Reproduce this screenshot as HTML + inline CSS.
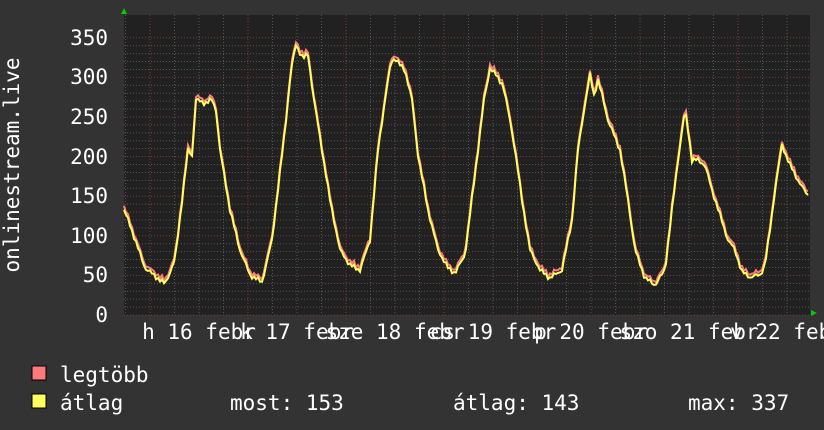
<!DOCTYPE html>
<html><head><meta charset="utf-8"><style>
html,body{margin:0;padding:0;background:#333333;}
svg{display:block}
text{font-family:"DejaVu Sans Mono","Liberation Mono",monospace;fill:#fff;font-size:21px}
</style></head><body>
<svg id="g" width="824" height="430" xmlns="http://www.w3.org/2000/svg">
<rect width="824" height="430" fill="#333333"/>
<rect x="124" y="15" width="686" height="300" fill="#212121"/>
<g id="grid"></g>
<polyline id="mx" fill="none" stroke="#ff7b7b" stroke-width="2"/>
<polyline id="av" fill="none" stroke="#ffff60" stroke-width="2"/>
<polygon points="121,14 127,14 124,8" fill="#00cc00"/>
<polygon points="811,310 811,316 817,313" fill="#00cc00"/>
<g text-anchor="end">
<text x="108" y="45">350</text><text x="108" y="84">300</text><text x="108" y="124">250</text>
<text x="108" y="164">200</text><text x="108" y="203">150</text><text x="108" y="243">100</text>
<text x="108" y="282">50</text><text x="108" y="322">0</text>
</g>
<text transform="translate(19,165) rotate(-90)" text-anchor="middle">onlinestream.live</text>
<g text-anchor="middle">
<text x="199" y="339">h 16 febr</text><text x="297" y="339">k 17 febr</text>
<text x="395" y="339">sze 18 febr</text><text x="493" y="339">cs 19 febr</text>
<text x="591" y="339">p 20 febr</text><text x="689" y="339">szo 21 febr</text>
<text x="787" y="339">v 22 febr</text>
</g>
<rect x="32" y="366" width="14" height="14" fill="#ff7b7b" stroke="#000" stroke-width="1"/>
<rect x="32" y="394" width="14" height="14" fill="#ffff60" stroke="#000" stroke-width="1"/>
<text x="60" y="382">legtöbb</text>
<text x="60" y="410">átlag</text>
<text x="230" y="410">most: 153</text>
<text x="453" y="410">átlag: 143</text>
<text x="688" y="410">max: 337</text>
</svg>
<script>
var g=document.getElementById("grid"),s="";
for(var v=0;v<=350;v+=10){var y=315-v*0.792;var maj=v%50==0;
s+='<line x1="124" x2="810" y1="'+y+'" y2="'+y+'" stroke="'+(maj?'#7a3a3a':'#555')+'" stroke-dasharray="1,2" stroke-width="1"/>';}
for(var x=150-98;x<810;x+=24.5){if(x<124)continue;var maj=Math.abs(((x-150)%98+98)%98)<1;
s+='<line x1="'+x+'" x2="'+x+'" y1="15" y2="'+(maj?319:315)+'" stroke="'+(maj?'#7a3a3a':'#555')+'" stroke-dasharray="1,2" stroke-width="1"/>';}
g.innerHTML=s;
var k=[[124,210],[130,225],[145,268],[155,276],[165,284],[175,260],[188,150],[192,155],[196,100],[205,103],[212,100],[216,110],[220,150],[230,210],[240,250],[250,275],[262,282],[272,240],[285,130],[291,70],[296,45],[303,58],[308,55],[314,100],[322,150],[330,200],[340,250],[350,265],[360,270],[370,240],[378,150],[385,100],[391,62],[395,58],[400,65],[405,70],[412,100],[418,155],[428,210],[438,250],[448,268],[455,273],[465,255],[478,150],[484,100],[490,68],[496,75],[503,85],[510,120],[515,150],[522,200],[530,250],[540,270],[550,278],[562,270],[572,220],[578,150],[584,110],[590,75],[594,95],[598,80],[602,95],[608,120],[620,150],[628,200],[635,250],[645,278],[655,285],[665,270],[672,210],[678,160],[685,110],[688,130],[692,160],[698,160],[705,165],[712,190],[720,215],[728,240],[735,250],[742,272],[750,277],[760,275],[765,265],[770,230],[775,190],[782,145],[790,165],[798,180],[804,190],[808,195]];
var a=[],b=[];
for(var x=124;x<=808;x+=2){var i=0;while(i<k.length-2&&k[i+1][0]<x)i++;
var p=k[i],q=k[i+1],t=(x-p[0])/(q[0]-p[0]);var y=p[1]+(q[1]-p[1])*t;
var n=Math.sin(x*1.7)*1.5+Math.sin(x*0.53)*1.2;y+=n;
a.push(x+","+y.toFixed(1));b.push(x+","+(y-2-Math.abs(Math.sin(x*0.9))*2).toFixed(1));}
document.getElementById("av").setAttribute("points",a.join(" "));
document.getElementById("mx").setAttribute("points",b.join(" "));
</script>
</body></html>
